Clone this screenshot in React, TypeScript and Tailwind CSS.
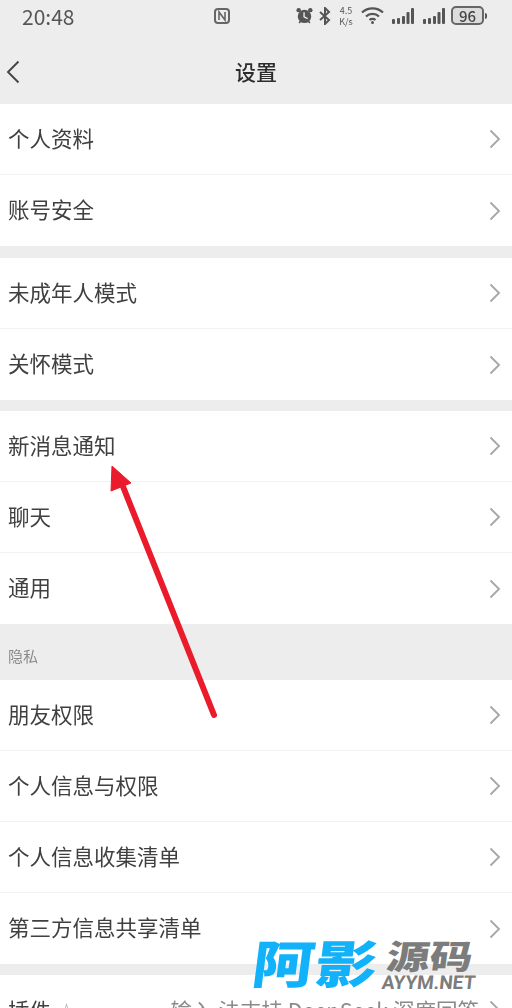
import React from "react";

const Chevron = () => (
  <svg width="12" height="20" viewBox="0 0 12 20" fill="none" className="shrink-0">
    <path d="M1.5 1.5 L10 10 L1.5 18.5" stroke="#a8a8a8" strokeWidth="1.9" />
  </svg>
);

const Row = ({ label, border = true }: { label: string; border?: boolean }) => (
  <div className={`flex h-[71px] items-center justify-between pl-2 pr-[11px] ${border ? "border-b border-[#f2f2f2]" : ""}`}>
    <span className="mb-[3px] text-[21.5px] leading-none text-[#404040]">{label}</span>
    <Chevron />
  </div>
);

const Section = ({ items }: { items: string[] }) => (
  <div className="bg-white">
    {items.map((t, i) => (
      <Row key={t} label={t} border={i < items.length - 1} />
    ))}
  </div>
);

const Signal = () => (
  <svg width="22" height="16" viewBox="0 0 22 16" fill="#555">
    <rect x="0" y="11" width="3" height="5" rx="1" />
    <rect x="5" y="10" width="3" height="6" rx="1" />
    <rect x="10" y="8" width="3" height="8" rx="1" />
    <rect x="14.5" y="4" width="3" height="12" rx="1" />
    <rect x="19" y="0" width="3" height="16" rx="1" />
  </svg>
);

const StatusBar = () => (
  <div className="flex h-[31px] items-center pl-[22px] text-[#555]">
    <span className="mt-[2px] w-[192px] text-[21px] leading-none">20:48</span>
    <svg width="16" height="16" viewBox="0 0 16 16" fill="none" stroke="#666" strokeWidth="2">
      <rect x="1" y="1" width="14" height="14" rx="3" />
      <path d="M5 12 V4 L11 12 V4" strokeWidth="1.6" />
    </svg>
    <div className="ml-[66px] flex items-center">
      <svg width="17" height="17" viewBox="0 0 19 19" fill="#555">
        <circle cx="9.5" cy="10.5" r="7.5" />
        <circle cx="3" cy="3.5" r="2.5" />
        <circle cx="16" cy="3.5" r="2.5" />
        <path d="M3.5 18 L5.5 15.5 M15.5 18 L13.5 15.5" stroke="#555" strokeWidth="1.8" />
        <path d="M9 6 V11 L13 13" stroke="#eee" strokeWidth="1.5" fill="none" />
      </svg>
      <svg width="12" height="18" viewBox="0 0 12 18" fill="none" stroke="#555" strokeWidth="2" className="ml-[6px]">
        <path d="M1 5 L10 13 L6 17 V1 L10 5 L1 13" />
      </svg>
      <div className="ml-[6px] flex w-[18px] flex-col items-center text-[9px] leading-[11px]">
        <span>4.5</span>
        <span>K/s</span>
      </div>
      <svg width="23" height="19" viewBox="0 0 23 19" fill="none" stroke="#555" strokeWidth="2.2" className="ml-[6px]">
        <path d="M1 6.5 C7 1 16 1 22 6.5" />
        <path d="M5 10.5 C8.5 7 14.5 7 18 10.5" />
        <path d="M8.5 14 C10 12.5 13 12.5 14.5 14" />
        <circle cx="11.5" cy="16.5" r="1.5" fill="#555" stroke="none" />
      </svg>
      <div className="ml-[8px]"><Signal /></div>
      <div className="ml-[9px]"><Signal /></div>
      <div className="ml-[6px] flex h-[19px] w-[33px] items-center justify-center rounded-[5px] border-[2px] border-[#666] bg-[#dcdcdc] text-[15px] font-medium leading-none text-[#444]">
        96
      </div>
      <div className="ml-[1px] h-[6px] w-[2px] rounded-r-sm bg-[#555]" />
    </div>
  </div>
);

export default function App() {
  return (
    <div className="relative h-[1008px] w-[512px] overflow-hidden bg-[#ededed] [font-family:'Noto_Sans_CJK_SC','Roboto',sans-serif]">
      <div className="blur-[0.4px]">
        <StatusBar />
        <div className="relative flex h-[73px] items-center justify-center">
          <svg width="14" height="24" viewBox="0 0 14 24" fill="none" className="absolute left-[6px] top-[29px]">
            <path d="M12.5 1.5 L2 12 L12.5 22.5" stroke="#444" strokeWidth="1.9" />
          </svg>
          <span className="mt-[8px] text-[21px] font-medium leading-none text-[#2c2c2c]">设置</span>
        </div>
        <Section items={["个人资料", "账号安全"]} />
        <div className="h-[12px]" />
        <Section items={["未成年人模式", "关怀模式"]} />
        <div className="h-[11px]" />
        <Section items={["新消息通知", "聊天", "通用"]} />
        <div className="flex h-[56px] items-center pl-2 pt-[8px] text-[15px] text-[#8a8a8a]">隐私</div>
        <Section items={["朋友权限", "个人信息与权限", "个人信息收集清单", "第三方信息共享清单"]} />
        <div className="h-[11px]" />
        <div className="flex h-[71px] items-start justify-between bg-white pl-2 pr-[11px] pt-[24px]">
          <span className="flex items-center gap-[8px] text-[21.5px] leading-none text-[#404040]">
            插件 <span className="text-[15px] text-[#999]">☆</span>
          </span>
          <span className="flex items-center gap-[10px] text-[21.5px] leading-none text-[#8a8a8a]">
            输入 法支持 DeepSeek 深度回答
            <Chevron />
          </span>
        </div>
      </div>

      {/* annotation arrow */}
      <svg width="512" height="1008" className="pointer-events-none absolute left-0 top-0">
        <path d="M214 715 L122 484" stroke="#ea1c2c" strokeWidth="6" strokeLinecap="round" fill="none" />
        <path d="M112 466 L131 483 L111 491 Z" fill="#ea1c2c" stroke="#ea1c2c" strokeWidth="1" />
      </svg>

      {/* watermark */}
      <div className="absolute left-[256px] top-[938px] flex items-start">
        <span className="origin-top -skew-x-6 scale-y-[0.82] text-[62px] font-black leading-[56px] tracking-[1px] text-[#12b2fb]">阿影</span>
        <div className="ml-[7px] flex flex-col items-end">
          <span className="mt-[3px] origin-top -skew-x-6 scale-y-[0.78] text-[43px] font-black leading-[34px] text-[#7c7c7c]">源码</span>
          <span className="-ml-[8px] -skew-x-6 text-[19px] font-bold leading-[15px] text-[#7c7c7c] [font-family:'Roboto',sans-serif]">AYYM.NET</span>
        </div>
      </div>
    </div>
  );
}
